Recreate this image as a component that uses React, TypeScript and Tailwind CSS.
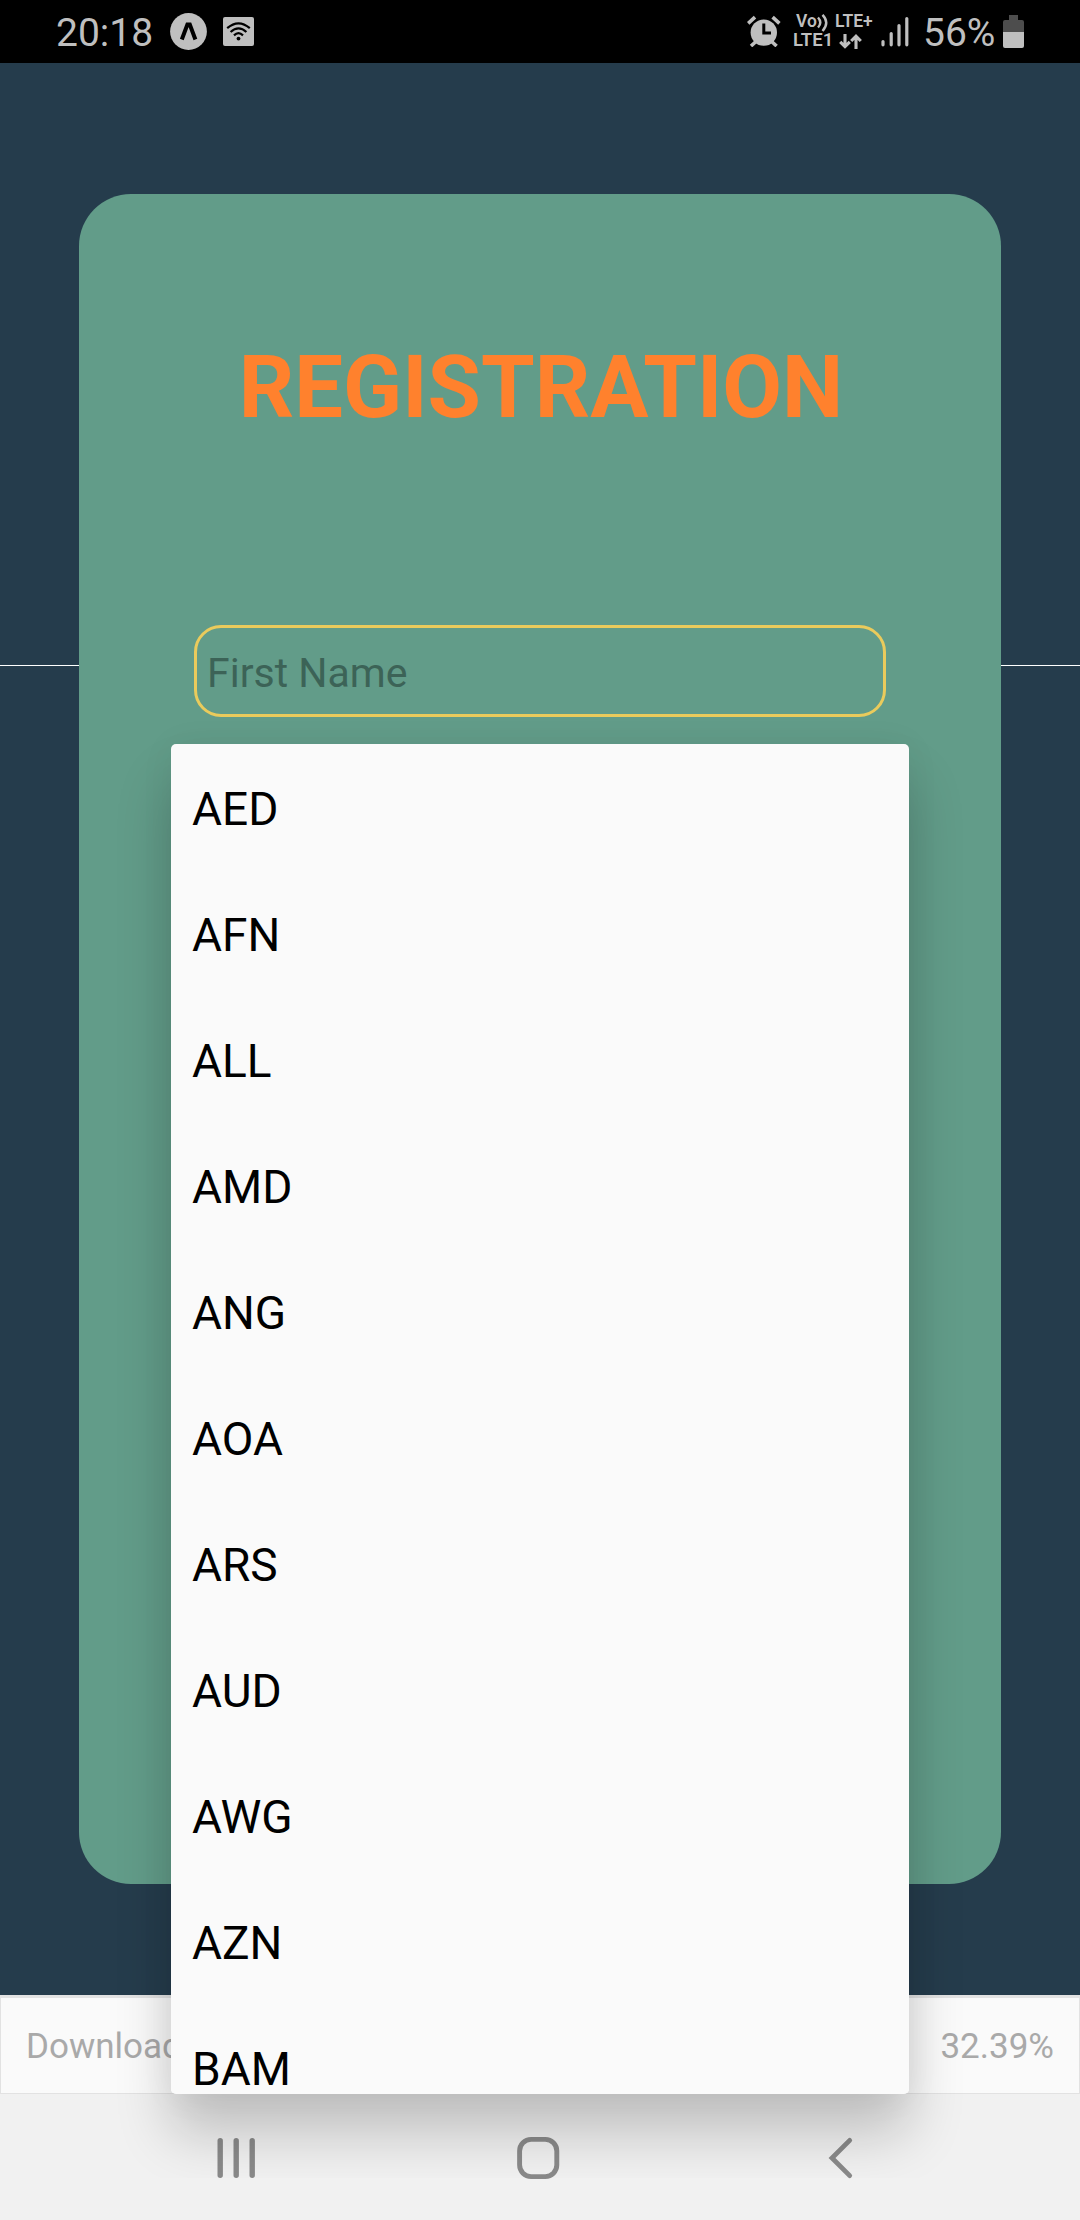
import React from "react";

const currencies = ["AED", "AFN", "ALL", "AMD", "ANG", "AOA", "ARS", "AUD", "AWG", "AZN", "BAM"];

function ExpoIcon() {
  return (
    <svg className="ml-[18px] mt-[13px] h-[37px] w-[37px]" viewBox="0 0 37 37">
      <circle cx="18.5" cy="18.5" r="18.4" fill="#bfbfbf" />
      <path d="M11.8 26.5 L17.4 11.5 H19.8 L25.4 26.5" fill="none" stroke="#000" strokeWidth="4" />
    </svg>
  );
}

function WifiSquareIcon() {
  return (
    <svg className="ml-4 mt-[17px] h-[29px] w-[31px]" viewBox="0 0 31 29">
      <rect width="31" height="29" rx="2" fill="#bfbfbf" />
      <g fill="none" stroke="#000" strokeWidth="2.2">
        <path d="M4.2 11.2 Q15.5 1.4 26.8 11.2" />
        <path d="M7.6 15 Q15.5 7.8 23.4 15" />
        <path d="M11 18.4 Q15.5 14 20 18.4" />
      </g>
      <circle cx="15.5" cy="21.6" r="1.9" />
    </svg>
  );
}

function AlarmIcon() {
  return (
    <svg className="mt-[15px] h-8 w-[34px]" viewBox="0 0 34 32">
      <circle cx="16.8" cy="17.6" r="13.2" fill="#bfbfbf" />
      <g stroke="#bfbfbf" strokeWidth="3.6">
        <path d="M1.2 8.4 L8 2.2 M32.4 8.4 L25.6 2.2" />
        <path d="M4 31 L9 26.5 M29.6 31 L24.6 26.5" />
      </g>
      <path d="M16.8 8.5 V18 H24" fill="none" stroke="#000" strokeWidth="3" />
    </svg>
  );
}

function NetworkLabels() {
  return (
    <div className="ml-3 mt-[11px] flex h-[40px] w-[82px] flex-col font-semibold">
      <div className="flex h-[21px] items-start text-[17.5px] leading-[21px]">
        <span className="ml-[3px] w-[21px]">Vo</span>
        <svg className="mt-[3px] h-[18px] w-3" viewBox="0 0 12 18">
          <path d="M1 3.5 Q5.6 8.5 1 13.5 M5.5 0.8 Q13 8.5 5.5 17" fill="none" stroke="#bfbfbf" strokeWidth="2.4" />
        </svg>
        <span className="ml-[6px]">LTE+</span>
      </div>
      <div className="flex h-[19px] items-start text-[18.5px] leading-[17px]">
        <span className="w-[46px]">LTE1</span>
        <svg className="mt-[2px] h-[15px] w-[23px]" viewBox="0 0 23 15">
          <path d="M6 0 V12 M1.2 7.8 L6 12.6 L10.8 7.8 M17 15 V2.5 M12.2 7 L17 2.2 L21.8 7" fill="none" stroke="#bfbfbf" strokeWidth="3.1" />
        </svg>
      </div>
    </div>
  );
}

function SignalIcon() {
  return (
    <svg className="ml-[6px] mt-4 h-[31px] w-[28px]" viewBox="0 0 28 31">
      <path d="M2 25.5 V28.8 M10.2 17.5 V28.8 M18 9.5 V28.8 M25.8 2.5 V28.8" stroke="#bfbfbf" strokeWidth="3.2" strokeLinecap="round" />
    </svg>
  );
}

function BatteryIcon() {
  return (
    <svg className="ml-[8px] mt-[15px] h-[33px] w-[21px]" viewBox="0 0 21 33">
      <path d="M6 0 H15 V5 H19 Q21 5 21 7 V17 H0 V7 Q0 5 2 5 H6 Z" fill="#4d4d4d" />
      <path d="M0 17 H21 V31 Q21 33 19 33 H2 Q0 33 0 31 Z" fill="#bfbfbf" />
    </svg>
  );
}

function StatusBar() {
  return (
    <header className="flex h-[63px] items-start justify-between bg-black pl-[56px] pr-[56px] text-[#bfbfbf]">
      <div className="flex">
        <span className="w-[96px] whitespace-nowrap text-[39px] leading-[67px]">20:18</span>
        <ExpoIcon />
        <WifiSquareIcon />
      </div>
      <div className="flex">
        <AlarmIcon />
        <NetworkLabels />
        <SignalIcon />
        <span className="ml-[14px] w-[72px] whitespace-nowrap text-[39px] leading-[67px]">56%</span>
        <BatteryIcon />
      </div>
    </header>
  );
}

function NavigationBar() {
  return (
    <nav className="flex h-[126px] items-start bg-[#f1f1f1] pt-[42px]">
      <svg className="ml-[217px] h-[44px] w-[39px]" viewBox="0 0 39 44">
        <path d="M3.2 4.7 V39.3 M19.2 4.7 V39.3 M35.2 4.7 V39.3" stroke="#8a8a8a" strokeWidth="5.4" strokeLinecap="round" />
      </svg>
      <svg className="ml-[260px] h-[44px] w-[44px]" viewBox="0 0 44 44">
        <rect x="3.6" y="3.4" width="37.2" height="37.2" rx="11.5" fill="none" stroke="#8a8a8a" strokeWidth="4.9" />
      </svg>
      <svg className="ml-[268px] h-[44px] w-[26px]" viewBox="0 0 26 44">
        <path d="M21.7 4.4 L4 22 L21.7 39.6" fill="none" stroke="#8a8a8a" strokeWidth="4.8" strokeLinecap="round" />
      </svg>
    </nav>
  );
}

export default function App() {
  return (
    <div className="relative flex h-[2220px] w-[1080px] flex-col overflow-hidden bg-[#253c4c] font-['Roboto',sans-serif]">
      <StatusBar />
      <main className="relative h-[1932px] px-[79px] pt-[131px]">
        <div className="absolute inset-x-0 top-[602px] h-px bg-white" />
        <section className="relative flex h-[1690px] flex-col rounded-[52px] bg-[#629c89] px-[115px] pt-[144px]">
          <h1 className="whitespace-nowrap pl-[2px] text-center text-[86.7px] font-bold leading-[100px] text-[#ff812d]">REGISTRATION</h1>
          <div className="mt-[187px] flex h-[92px] items-center rounded-[27px] border-3 border-[#eacb5c] pl-[10px] pt-[6px] text-[41px] text-[#3c6357]">
            First Name
          </div>
        </section>
      </main>
      <div className="flex h-[99px] items-center justify-between border border-t-3 border-[#e2e2e2] bg-[#fafafa] px-[25px] pt-[3px] text-[35px] text-[#a9a9a9]">
        <span>Download</span>
        <span>32.39%</span>
      </div>
      <NavigationBar />
      <div className="absolute inset-x-0 top-[63px] h-[2115px] overflow-hidden px-[171px] pt-[681px]">
        <div className="h-[1350px] rounded-[5px] shadow-[0_40px_56px_rgba(0,0,0,0.2),0_2px_36px_rgba(0,0,0,0.05)]">
          <ul className="h-full overflow-hidden rounded-[5px] bg-[#fafafa]">
            {currencies.map((code) => (
              <li key={code} className="flex h-[126px] items-center pl-[21px] pt-1 text-[46px] text-black">
                {code}
              </li>
            ))}
          </ul>
        </div>
      </div>
    </div>
  );
}
